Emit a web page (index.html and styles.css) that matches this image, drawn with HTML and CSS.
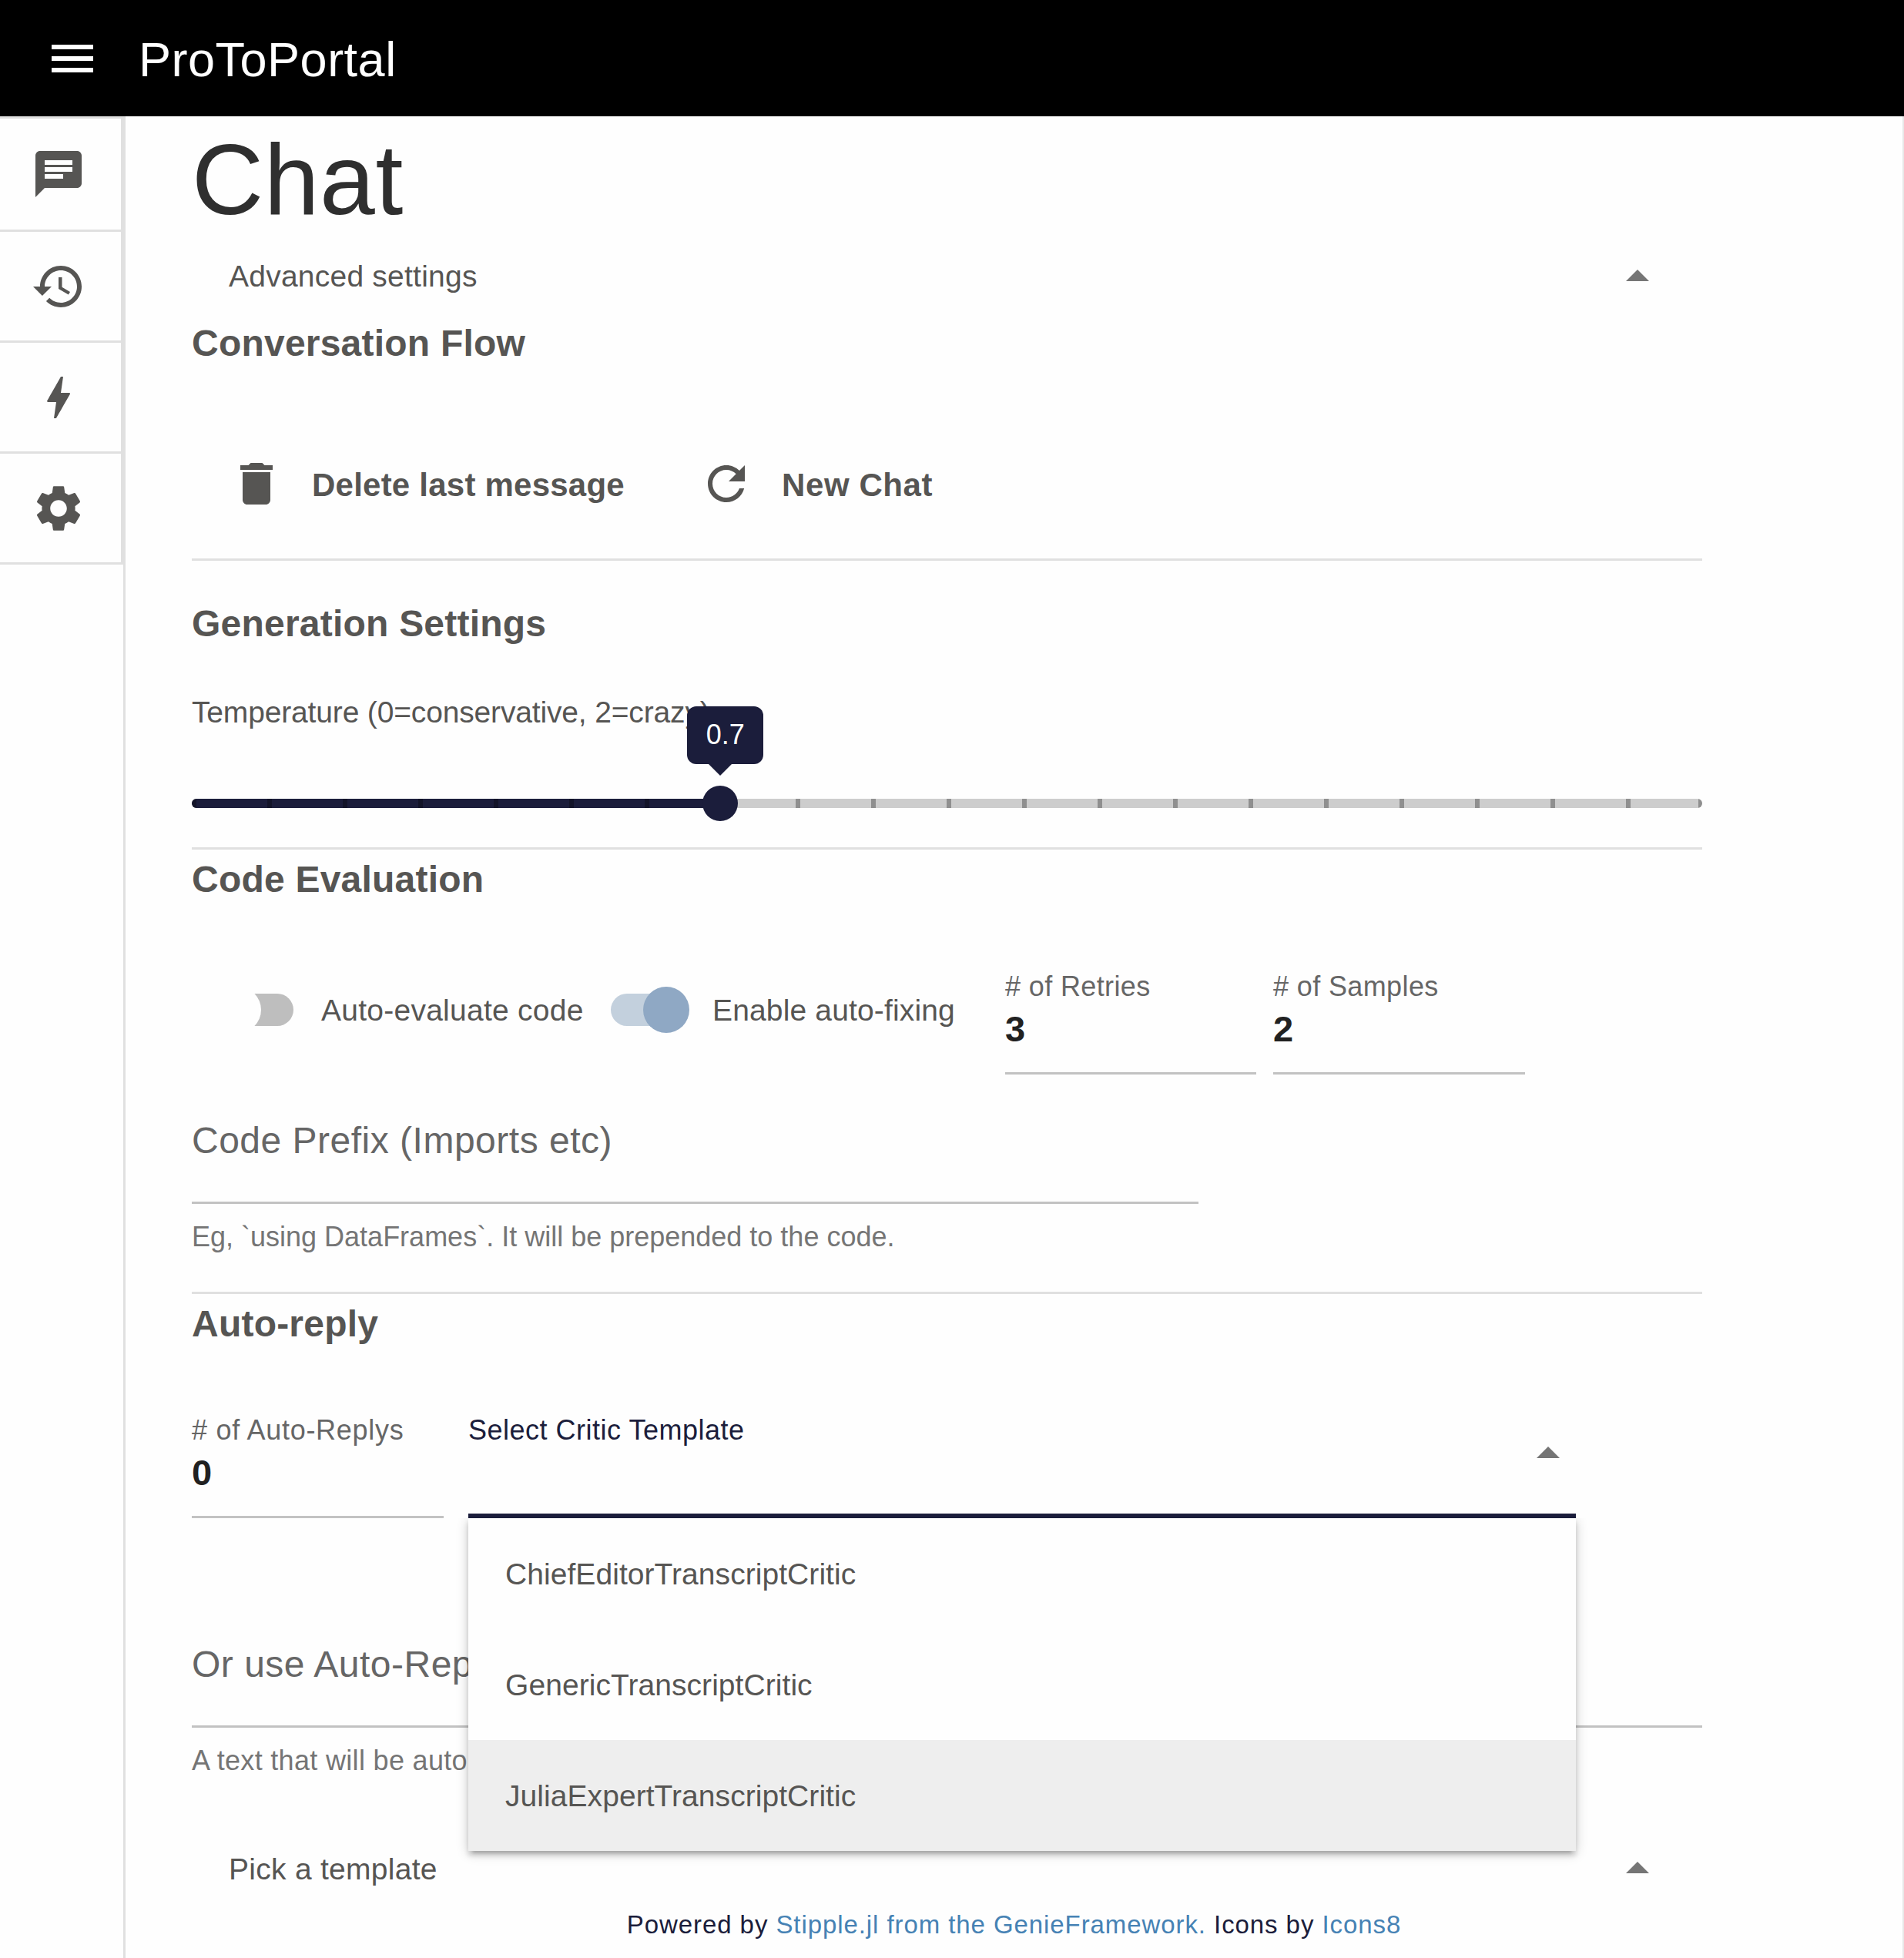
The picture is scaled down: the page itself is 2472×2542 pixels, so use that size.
FILE: index.html
```html
<!DOCTYPE html>
<html lang="en">
<head>
<meta charset="utf-8">
<title>ProToPortal</title>
<link rel="stylesheet" href="styles.css">
</head>
<body>
<header class="header">
  <svg class="icon" viewBox="0 0 24 24"><path d="M3 18h18v-2H3v2zm0-5h18v-2H3v2zm0-7v2h18V6H3z"/></svg>
  <div class="header-title">ProToPortal</div>
</header>
<div class="layout">
  <aside class="drawer">
    <nav class="nav">
      <a class="nav-item"><svg class="icon" viewBox="0 0 24 24"><path d="M20 2H4c-1.100 0-1.990.9-1.990 2L2 22l4-4h14c1.100 0 2-.9 2-2V4c0-1.100-.9-2-2-2zM6 9h12v2H6V9zm8 5H6v-2h8v2zm4-6H6V6h12v2z"/></svg></a>
      <a class="nav-item"><svg class="icon" viewBox="0 0 24 24"><path d="M13 3c-4.970 0-9 4.030-9 9H1l3.890 3.890.070.140L9 12H6c0-3.870 3.130-7 7-7s7 3.130 7 7-3.130 7-7 7c-1.930 0-3.680-.790-4.940-2.060l-1.420 1.420C8.270 19.990 10.510 21 13 21c4.970 0 9-4.030 9-9s-4.030-9-9-9zm-1 5v5l4.280 2.540.720-1.210-3.500-2.080V8H12z"/></svg></a>
      <a class="nav-item"><svg class="icon" viewBox="0 0 24 24"><path d="M11 21h-1l1-7H7.500c-.58 0-.57-.32-.38-.66.19-.34.05-.08.07-.12C8.480 10.940 10.420 7.540 13 3h1l-1 7h3.500c.49 0 .56.33.47.51l-.07.15C12.960 17.550 11 21 11 21z"/></svg></a>
      <a class="nav-item"><svg class="icon" viewBox="0 0 24 24"><path d="M19.140 12.940c.04-.3.06-.61.06-.94 0-.32-.02-.64-.07-.94l2.030-1.580c.18-.14.23-.41.12-.61l-1.920-3.320c-.12-.22-.37-.29-.59-.22l-2.390.96c-.5-.38-1.030-.7-1.620-.94l-.36-2.540c-.04-.24-.24-.41-.48-.41h-3.840c-.24 0-.43.17-.47.41l-.36 2.540c-.59.24-1.130.57-1.620.94l-2.390-.96c-.22-.08-.47 0-.59.22L2.740 8.870c-.12.21-.08.47.12.61l2.030 1.580c-.05.3-.09.63-.09.94s.02.64.07.94l-2.030 1.580c-.18.14-.23.41-.12.61l1.920 3.320c.12.22.37.29.59.22l2.390-.96c.5.38 1.030.7 1.620.94l.36 2.540c.05.24.24.41.48.41h3.840c.24 0 .44-.17.47-.41l.36-2.540c.59-.24 1.130-.56 1.620-.94l2.390.96c.22.08.47 0 .59-.22l1.920-3.320c.12-.22.07-.47-.12-.61l-2.010-1.580zM12 15.600c-1.980 0-3.600-1.620-3.600-3.600s1.620-3.600 3.600-3.600 3.600 1.620 3.600 3.600-1.620 3.600-3.600 3.600z"/></svg></a>
    </nav>
  </aside>
  <main class="page">
    <div class="content">
      <h1 class="title">Chat</h1>
      <div class="expansion">
        <span class="expansion-label">Advanced settings</span>
        <svg class="icon icon-muted" viewBox="0 0 24 24"><path d="M7 14l5-5 5 5z"/></svg>
      </div>

      <h2 class="section">Conversation Flow</h2>
      <div class="actions">
        <div class="action">
          <svg class="icon" viewBox="0 0 24 24"><path d="M6 19c0 1.100.9 2 2 2h8c1.100 0 2-.9 2-2V7H6v12zM19 4h-3.500l-1-1h-5l-1 1H5v2h14V4z"/></svg>
          <span class="action-label">Delete last message</span>
        </div>
        <div class="action">
          <svg class="icon" viewBox="0 0 24 24"><path d="M17.650 6.350C16.200 4.900 14.210 4 12 4c-4.420 0-7.990 3.580-7.990 8s3.570 8 7.990 8c3.730 0 6.840-2.550 7.730-6h-2.080c-.82 2.330-3.040 4-5.650 4-3.310 0-6-2.690-6-6s2.690-6 6-6c1.660 0 3.140.69 4.220 1.780L13 11h7V4l-2.350 2.350z"/></svg>
          <span class="action-label action-label-short">New Chat</span>
        </div>
      </div>
      <hr class="divider">

      <h2 class="section section-generation">Generation Settings</h2>
      <div class="slider-label">Temperature (0=conservative, 2=crazy)</div>
      <div class="slider">
        <div class="slider-track">
          <div class="slider-fill" style="width: 35%"></div>
          <div class="slider-marks"></div>
        </div>
        <div class="slider-thumb" style="left: 35%">
          <div class="slider-pin">0.7</div>
        </div>
      </div>
      <hr class="divider">

      <h2 class="section">Code Evaluation</h2>
      <div class="eval-row">
        <div class="toggle toggle-off"><span class="toggle-track"><span class="toggle-thumb"></span></span><span class="toggle-label">Auto-evaluate code</span></div>
        <div class="toggle toggle-on"><span class="toggle-track"><span class="toggle-thumb"></span></span><span class="toggle-label">Enable auto-fixing</span></div>
        <div class="field field-small"><div class="field-label">#&nbsp;of Retries</div><div class="field-value">3</div></div>
        <div class="field field-small"><div class="field-label">#&nbsp;of Samples</div><div class="field-value">2</div></div>
      </div>
      <div class="field field-large field-prefix"><div class="field-placeholder">Code Prefix (Imports etc)</div></div>
      <div class="hint">Eg, `using DataFrames`. It will be prepended to the code.</div>
      <hr class="divider divider-reply">

      <h2 class="section">Auto-reply</h2>
      <div class="reply-row">
        <div class="field field-small"><div class="field-label field-label-wide">#&nbsp;of Auto-Replys</div><div class="field-value">0</div></div>
        <div class="select">
          <div class="select-label">Select Critic Template</div>
          <svg class="icon icon-muted" viewBox="0 0 24 24"><path d="M7 14l5-5 5 5z"/></svg>
          <div class="menu">
            <div class="menu-item">ChiefEditorTranscriptCritic</div>
            <div class="menu-item">GenericTranscriptCritic</div>
            <div class="menu-item menu-item-active">JuliaExpertTranscriptCritic</div>
          </div>
        </div>
      </div>
      <div class="field field-large field-reply"><div class="field-placeholder">Or use Auto-Reply</div></div>
      <div class="hint hint-reply">A text that will be automatically</div>
      <div class="expansion expansion-template">
        <span class="expansion-label">Pick a template</span>
        <svg class="icon icon-muted" viewBox="0 0 24 24"><path d="M7 14l5-5 5 5z"/></svg>
      </div>
    </div>
    <footer class="footer">Powered by <a class="link">Stipple.jl from the GenieFramework.</a> Icons by <a class="link">Icons8</a></footer>
  </main>
</div>
</body>
</html>
```
FILE: styles.css
```css
:root {
  --ink: #565553;
  --brand: #1b1d3b;
  --line: #e0e0e0;
}

* { box-sizing: border-box; }

body {
  margin: 0;
  height: 2542px;
  overflow: hidden;
  background: #fefefe;
  color: var(--ink);
  font-family: "Liberation Sans", Arial, sans-serif;
  font-size: 39px;
  white-space: nowrap;
}

.icon { display: block; flex: none; width: 72px; height: 72px; fill: currentColor; }
.icon-muted { color: #757575; }

.header {
  display: flex;
  align-items: center;
  gap: 50px;
  height: 151px;
  padding: 1px 0 0 58px;
  background: #000;
  color: #fff;
}
.header-title { font-size: 63px; line-height: 72px; letter-spacing: 0.5px; padding-top: 2px; }

.layout { display: flex; height: 2391px; }

/* Side navigation */
.drawer { flex: none; width: 163px; border-right: 3px solid var(--line); }
.nav { border: solid var(--line); border-width: 3px 3px 3px 0; }
.nav-item {
  display: flex;
  align-items: center;
  height: 144px;
  padding-left: 40px;
}
.nav-item + .nav-item { border-top: 3px solid var(--line); }

/* Page */
.page { flex: 1; border-right: 2px solid #e8e8e8; }
.content { width: 1961px; height: 2325px; margin-left: 86px; padding-top: 6px; }

.title {
  margin: 0 0 1px;
  color: #2f2f2f;
  font-size: 129px;
  font-weight: 400;
  line-height: 153px;
  letter-spacing: 0.6px;
}

.expansion {
  display: flex;
  align-items: center;
  justify-content: space-between;
  height: 96px;
  padding: 0 48px;
}
.expansion-label { padding-bottom: 1px; letter-spacing: 0.23px; }
.expansion-template { margin-top: 70px; }
.expansion-template .expansion-label { padding: 1px 0 0; letter-spacing: 0.28px; }

.section { margin: 0; font-size: 48px; font-weight: 700; line-height: 77px; letter-spacing: 0.22px; }
.section-generation { margin-top: 43px; }

.divider { height: 3px; margin: 0; border: 0; background: var(--line); }
.divider-reply { margin-top: 49px; }

.actions { display: flex; height: 241px; padding: 72px 0 25px 48px; }
.action { display: flex; align-items: center; gap: 36px; min-width: 610px; }
.action-label { padding-top: 3px; font-size: 42px; font-weight: 700; letter-spacing: 0.23px; }
.action-label-short { letter-spacing: 0.6px; }

/* Slider */
.slider-label { margin-top: 48px; line-height: 57px; letter-spacing: -0.16px; }
.slider { position: relative; display: flex; align-items: center; height: 60px; margin: 60px 0 27px; }
.slider-track { position: relative; width: 100%; height: 12px; border-radius: 6px; background: #cdcdcd; overflow: hidden; }
.slider-fill { height: 100%; background: var(--brand); }
.slider-marks {
  position: absolute;
  inset: 0;
  background: repeating-linear-gradient(to right, rgba(0, 0, 0, 0.3) 0 6px, transparent 6px 98px) no-repeat;
  border-right: 5px solid rgba(0, 0, 0, 0.3);
}
.slider-thumb {
  position: absolute;
  top: 7px;
  width: 46px;
  height: 46px;
  margin-left: -23px;
  border-radius: 50%;
  background: var(--brand);
}
.slider-pin {
  position: absolute;
  top: -103px;
  left: -20px;
  width: 99px;
  height: 75px;
  border-radius: 12px;
  background: var(--brand);
  color: #fff;
  font-size: 36px;
  line-height: 74px;
  text-align: center;
}
.slider-pin::after {
  content: "";
  position: absolute;
  top: 74px;
  left: 27px;
  border: solid transparent;
  border-width: 16px 16px 0;
  border-top-color: var(--brand);
}

/* Toggles */
.eval-row { display: flex; height: 168px; margin-top: 47px; padding-left: 36px; }
.toggle { display: flex; align-items: center; gap: 36px; width: 508px; }
.toggle-track { position: relative; width: 96px; height: 42px; border-radius: 21px; background: #bebebe; }
.toggle-thumb { position: absolute; top: -9px; left: -6px; width: 60px; height: 60px; border-radius: 50%; background: #fefefe; }
.toggle-label { padding-top: 1px; letter-spacing: 0.25px; }
.toggle-on { width: 512px; }
.toggle-on .toggle-label { letter-spacing: 0.15px; }
.toggle-on .toggle-track { background: #c3d0dd; }
.toggle-on .toggle-thumb { left: 42px; background: #8fa8c4; }

/* Fields */
.field { height: 168px; border-bottom: 3px solid #c2c2c2; }
.field-small { width: 326px; padding-top: 31px; }
.eval-row .field-small + .field-small { width: 327px; margin-left: 22px; }
.field-label { color: #666; font-size: 36px; line-height: 45px; letter-spacing: 0.38px; }
.field-label-wide { letter-spacing: 0.7px; }
.field-value { color: #212121; font-size: 47px; font-weight: 700; line-height: 66px; }
.field-large { padding-top: 47px; }
.field-prefix { width: 1307px; }
.field-reply { margin-top: 104px; }
.field-placeholder { color: #666; font-size: 48px; line-height: 77px; letter-spacing: 0.5px; }
.hint { margin-top: 20px; color: #757575; font-size: 36px; line-height: 45px; }
.hint-reply { letter-spacing: 0.32px; }

/* Template select */
.reply-row { display: flex; gap: 32px; height: 168px; margin-top: 46px; }
.reply-row .field-small { width: 327px; }
.select {
  position: relative;
  display: flex;
  align-items: flex-start;
  justify-content: space-between;
  width: 1438px;
  border-bottom: 6px solid var(--brand);
}
.select .icon { margin-top: 48px; }
.select-label { margin-top: 31px; color: var(--brand); font-size: 36px; line-height: 45px; letter-spacing: 0.5px; }
.menu {
  position: absolute;
  z-index: 1;
  top: 168px;
  left: 0;
  right: 0;
  background: #fefefe;
  box-shadow: 0 3px 15px rgba(0, 0, 0, 0.2), 0 6px 6px rgba(0, 0, 0, 0.14), 0 9px 3px -6px rgba(0, 0, 0, 0.12);
  clip-path: inset(0 -30px -40px -30px);
}
.menu-item { height: 144px; padding: 1px 48px 0; line-height: 143px; letter-spacing: 0.06px; }
.menu-item-active { background: #eee; }

.footer { color: var(--brand); font-size: 33px; line-height: 45px; letter-spacing: 0.92px; text-align: center; }
.link { color: #4682b4; }
```
